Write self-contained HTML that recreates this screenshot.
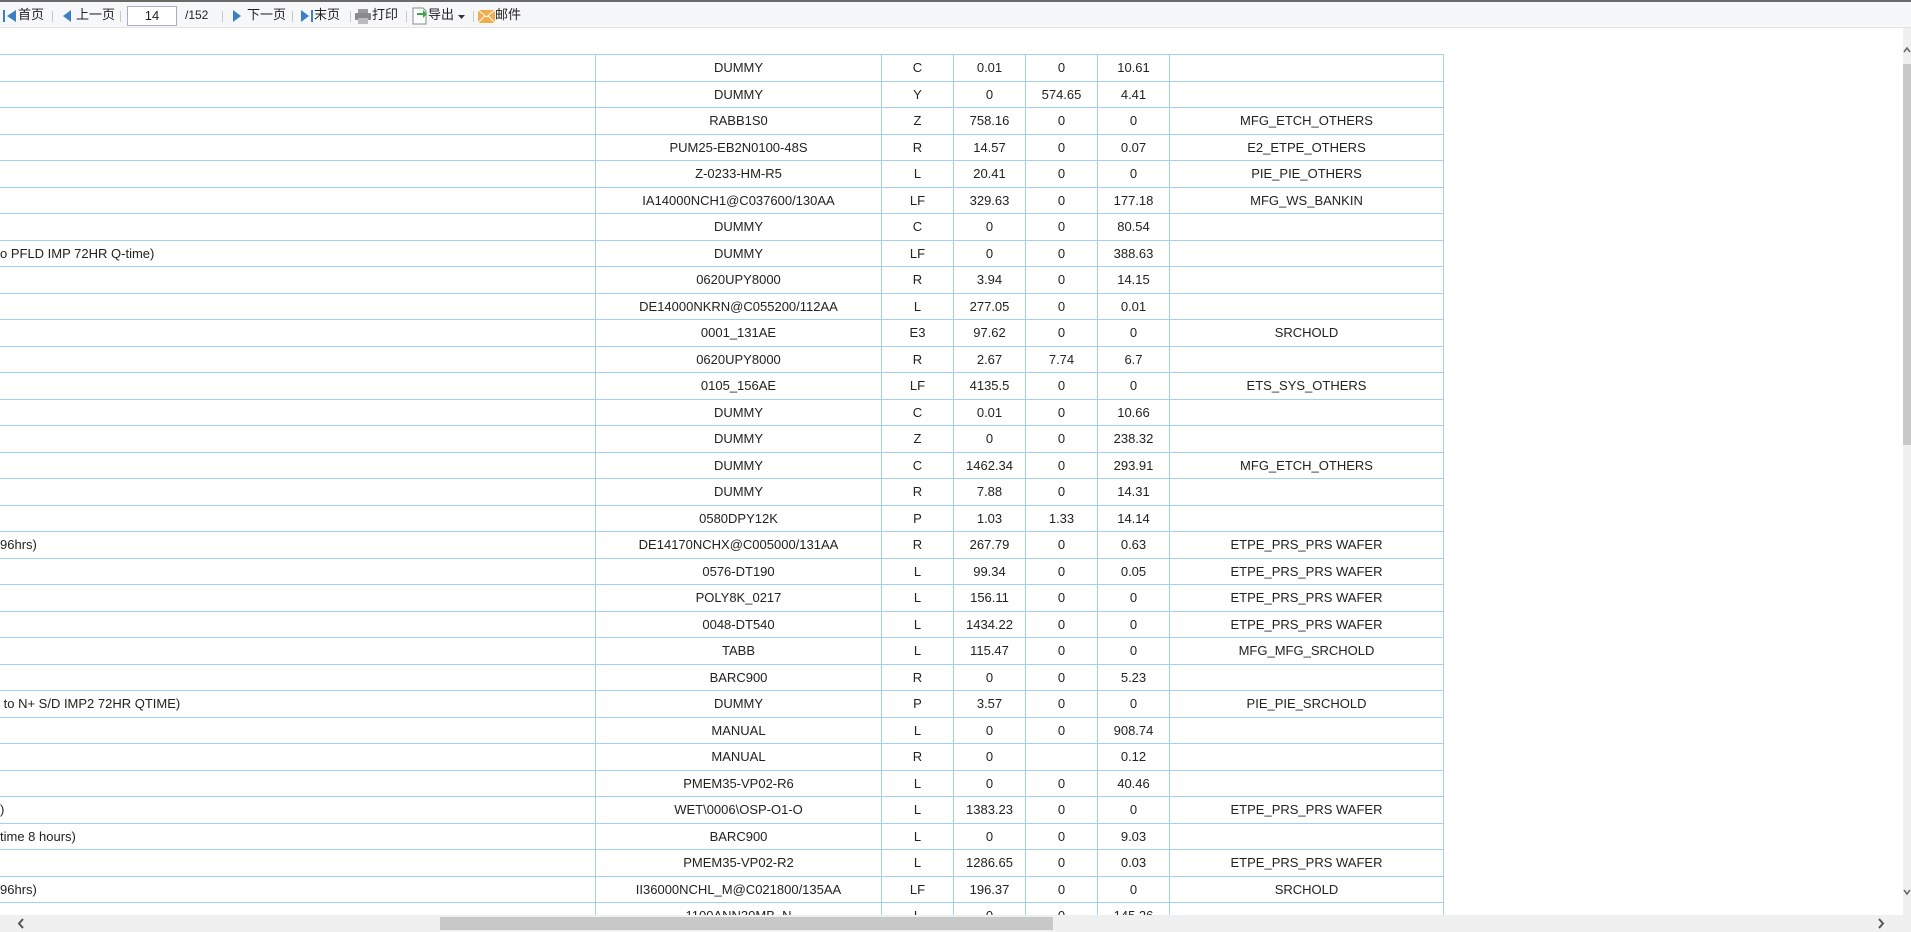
<!DOCTYPE html>
<html><head><meta charset="utf-8">
<style>
*{margin:0;padding:0;box-sizing:border-box}
html,body{width:1911px;height:932px;overflow:hidden;background:#fff;font-family:"Liberation Sans","Noto Sans CJK SC",sans-serif;color:#222}
#tb{position:absolute;left:0;top:0;width:1911px;height:28px;background:#f6f7f9;border-top:2px solid #6b6b6b;border-bottom:1px solid #e2e4e8}
.t{position:absolute;top:4px;font-size:13px;line-height:18px;color:#222}
.sep{position:absolute;top:9px;width:1px;height:11px;background:#c8c8c8}
svg{position:absolute}
#inp{position:absolute;left:127px;top:4px;width:50px;height:20px;border:1px solid #a8adc0;background:#fff;font-size:13px;text-align:center;line-height:18px}
#tbl{position:absolute;left:-1px;top:54px;border-collapse:collapse;table-layout:fixed}
#tbl td{border:1px solid #a3cff7;height:26.5px;font-size:13px;text-align:center;white-space:nowrap;overflow:hidden;padding:0}
#tbl td.l{text-align:left}
#hs{position:absolute;left:0;top:915px;width:1903px;height:17px;background:#f0f0f0}
#hth{position:absolute;left:440px;top:917px;width:613px;height:13px;background:#c8c8c8}
#vs{position:absolute;left:1903px;top:28px;width:8px;height:904px;background:#f0f0f0}
#vth{position:absolute;left:1903px;top:64px;width:8px;height:381px;background:#c8c8c8}
</style></head><body>
<div id="tb">
<svg style="left:3px;top:7px" width="14" height="14"><rect x="0" y="1" width="2" height="12" fill="#3d7fc6"/><path d="M13 1 L4 7 L13 13Z" fill="#3d7fc6"/></svg>
<div class="t" style="left:18px">首页</div>
<div class="sep" style="left:52px"></div>
<svg style="left:62px;top:7px" width="10" height="14"><path d="M9 1 L1 7 L9 13Z" fill="#3d7fc6"/></svg>
<div class="t" style="left:76px">上一页</div>
<div class="sep" style="left:120px"></div>
<div id="inp">14</div>
<div class="t" style="left:185px;font-size:12px">/152</div>
<div class="sep" style="left:222px"></div>
<svg style="left:232px;top:7px" width="10" height="14"><path d="M1 1 L9 7 L1 13Z" fill="#3d7fc6"/></svg>
<div class="t" style="left:247px">下一页</div>
<div class="sep" style="left:292px"></div>
<svg style="left:300px;top:7px" width="14" height="14"><path d="M1 1 L9 7 L1 13Z" fill="#3d7fc6"/><rect x="11" y="1" width="2" height="12" fill="#3d7fc6"/></svg>
<div class="t" style="left:314px">末页</div>
<div class="sep" style="left:350px"></div>
<svg style="left:355px;top:7px" width="16" height="15"><rect x="3" y="0" width="10" height="4" fill="#999"/><rect x="0" y="4" width="16" height="7" rx="1" fill="#8a8a8a"/><rect x="3" y="9" width="10" height="6" fill="#bbb"/></svg>
<div class="t" style="left:372px">打印</div>
<div class="sep" style="left:406px"></div>
<svg style="left:412px;top:5px" width="16" height="18"><path d="M1 1 H11 L14 4 V17 H1Z" fill="#fff" stroke="#888"/><path d="M5 6 H11 V3 L15 7 L11 11 V8 H5Z" fill="#3aa84a"/></svg>
<div class="t" style="left:428px">导出</div>
<svg style="left:458px;top:13px" width="7" height="4"><path d="M0 0 H7 L3.5 4Z" fill="#333"/></svg>
<div class="sep" style="left:473px"></div>
<svg style="left:478px;top:8px" width="17" height="13"><rect width="17" height="13" fill="#f0ad4e"/><path d="M0 0 L8.5 7 L17 0 M0 13 L7 5.5 M17 13 L10 5.5" stroke="#fff" fill="none" stroke-width="1"/></svg>
<div class="t" style="left:495px">邮件</div>
</div>

<table id="tbl">
<colgroup><col style="width:596px"><col style="width:286px"><col style="width:72px"><col style="width:72px"><col style="width:72px"><col style="width:72px"><col style="width:274px"></colgroup>
<tr><td class="l"></td><td>DUMMY</td><td>C</td><td>0.01</td><td>0</td><td>10.61</td><td></td></tr>
<tr><td class="l"></td><td>DUMMY</td><td>Y</td><td>0</td><td>574.65</td><td>4.41</td><td></td></tr>
<tr><td class="l"></td><td>RABB1S0</td><td>Z</td><td>758.16</td><td>0</td><td>0</td><td>MFG_ETCH_OTHERS</td></tr>
<tr><td class="l"></td><td>PUM25-EB2N0100-48S</td><td>R</td><td>14.57</td><td>0</td><td>0.07</td><td>E2_ETPE_OTHERS</td></tr>
<tr><td class="l"></td><td>Z-0233-HM-R5</td><td>L</td><td>20.41</td><td>0</td><td>0</td><td>PIE_PIE_OTHERS</td></tr>
<tr><td class="l"></td><td>IA14000NCH1@C037600/130AA</td><td>LF</td><td>329.63</td><td>0</td><td>177.18</td><td>MFG_WS_BANKIN</td></tr>
<tr><td class="l"></td><td>DUMMY</td><td>C</td><td>0</td><td>0</td><td>80.54</td><td></td></tr>
<tr><td class="l">o PFLD IMP 72HR Q-time)</td><td>DUMMY</td><td>LF</td><td>0</td><td>0</td><td>388.63</td><td></td></tr>
<tr><td class="l"></td><td>0620UPY8000</td><td>R</td><td>3.94</td><td>0</td><td>14.15</td><td></td></tr>
<tr><td class="l"></td><td>DE14000NKRN@C055200/112AA</td><td>L</td><td>277.05</td><td>0</td><td>0.01</td><td></td></tr>
<tr><td class="l"></td><td>0001_131AE</td><td>E3</td><td>97.62</td><td>0</td><td>0</td><td>SRCHOLD</td></tr>
<tr><td class="l"></td><td>0620UPY8000</td><td>R</td><td>2.67</td><td>7.74</td><td>6.7</td><td></td></tr>
<tr><td class="l"></td><td>0105_156AE</td><td>LF</td><td>4135.5</td><td>0</td><td>0</td><td>ETS_SYS_OTHERS</td></tr>
<tr><td class="l"></td><td>DUMMY</td><td>C</td><td>0.01</td><td>0</td><td>10.66</td><td></td></tr>
<tr><td class="l"></td><td>DUMMY</td><td>Z</td><td>0</td><td>0</td><td>238.32</td><td></td></tr>
<tr><td class="l"></td><td>DUMMY</td><td>C</td><td>1462.34</td><td>0</td><td>293.91</td><td>MFG_ETCH_OTHERS</td></tr>
<tr><td class="l"></td><td>DUMMY</td><td>R</td><td>7.88</td><td>0</td><td>14.31</td><td></td></tr>
<tr><td class="l"></td><td>0580DPY12K</td><td>P</td><td>1.03</td><td>1.33</td><td>14.14</td><td></td></tr>
<tr><td class="l">96hrs)</td><td>DE14170NCHX@C005000/131AA</td><td>R</td><td>267.79</td><td>0</td><td>0.63</td><td>ETPE_PRS_PRS WAFER</td></tr>
<tr><td class="l"></td><td>0576-DT190</td><td>L</td><td>99.34</td><td>0</td><td>0.05</td><td>ETPE_PRS_PRS WAFER</td></tr>
<tr><td class="l"></td><td>POLY8K_0217</td><td>L</td><td>156.11</td><td>0</td><td>0</td><td>ETPE_PRS_PRS WAFER</td></tr>
<tr><td class="l"></td><td>0048-DT540</td><td>L</td><td>1434.22</td><td>0</td><td>0</td><td>ETPE_PRS_PRS WAFER</td></tr>
<tr><td class="l"></td><td>TABB</td><td>L</td><td>115.47</td><td>0</td><td>0</td><td>MFG_MFG_SRCHOLD</td></tr>
<tr><td class="l"></td><td>BARC900</td><td>R</td><td>0</td><td>0</td><td>5.23</td><td></td></tr>
<tr><td class="l">&nbsp;to N+ S/D IMP2 72HR QTIME)</td><td>DUMMY</td><td>P</td><td>3.57</td><td>0</td><td>0</td><td>PIE_PIE_SRCHOLD</td></tr>
<tr><td class="l"></td><td>MANUAL</td><td>L</td><td>0</td><td>0</td><td>908.74</td><td></td></tr>
<tr><td class="l"></td><td>MANUAL</td><td>R</td><td>0</td><td></td><td>0.12</td><td></td></tr>
<tr><td class="l"></td><td>PMEM35-VP02-R6</td><td>L</td><td>0</td><td>0</td><td>40.46</td><td></td></tr>
<tr><td class="l">)</td><td>WET\0006\OSP-O1-O</td><td>L</td><td>1383.23</td><td>0</td><td>0</td><td>ETPE_PRS_PRS WAFER</td></tr>
<tr><td class="l">time 8 hours)</td><td>BARC900</td><td>L</td><td>0</td><td>0</td><td>9.03</td><td></td></tr>
<tr><td class="l"></td><td>PMEM35-VP02-R2</td><td>L</td><td>1286.65</td><td>0</td><td>0.03</td><td>ETPE_PRS_PRS WAFER</td></tr>
<tr><td class="l">96hrs)</td><td>II36000NCHL_M@C021800/135AA</td><td>LF</td><td>196.37</td><td>0</td><td>0</td><td>SRCHOLD</td></tr>
<tr><td class="l"></td><td>1100ANN30MB_N</td><td>L</td><td>0</td><td>0</td><td>145.26</td><td></td></tr>
</table>

<div id="vs"></div><div id="vth"></div>
<svg style="left:1903px;top:46px" width="8" height="8"><path d="M1 6 L4 2 L7 6" stroke="#666" stroke-width="1.5" fill="none"/></svg>
<svg style="left:1903px;top:888px" width="8" height="8"><path d="M1 2 L4 6 L7 2" stroke="#666" stroke-width="1.5" fill="none"/></svg>
<div id="hs"></div><div id="hth"></div>
<svg style="left:16px;top:918px" width="10" height="11"><path d="M7 1 L3 5.5 L7 10" stroke="#555" stroke-width="2" fill="none"/></svg>
<svg style="left:1876px;top:918px" width="10" height="11"><path d="M3 1 L7 5.5 L3 10" stroke="#555" stroke-width="2" fill="none"/></svg>
</body></html>
